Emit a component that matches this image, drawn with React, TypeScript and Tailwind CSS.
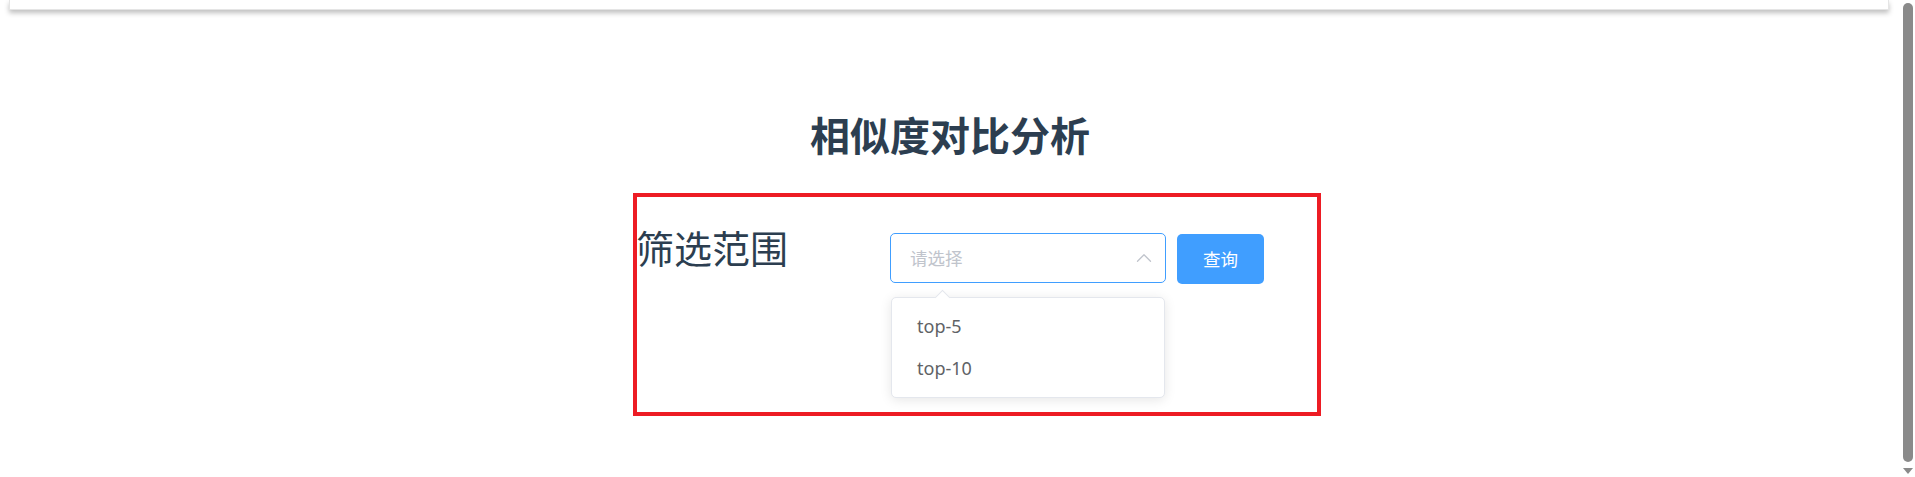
import { ChevronUp } from 'lucide-react';

const cjk = "font-['Noto_Sans','Noto_Sans_CJK_SC',sans-serif]";

function SelectBox() {
  return (
    <div className="relative mt-[5px]">
      <div className="flex h-[50px] w-[276px] items-center justify-between rounded-[5px] border border-[#409eff] bg-white pl-[19px] pr-[8px]">
        <span className="text-[17.5px] text-[#c0c4cc]">请选择</span>
        <ChevronUp className="h-[26px] w-[26px] text-[#c0c4cc]" strokeWidth={1.2} />
      </div>

      {/* dropdown popper */}
      <div className="absolute left-[1px] top-[64px] w-[274px] rounded-[5px] border border-[#e4e7ed] bg-white py-[7px] shadow-[0_2px_12px_0_rgba(0,0,0,0.1)]">
        <div className="absolute -top-[6px] left-[45px] h-[11px] w-[11px] rotate-45 border-l border-t border-[#e4e7ed] bg-white" />
        {['top-5', 'top-10'].map((item) => (
          <div key={item} className="flex h-[42.5px] items-center px-[25px] text-[18px] text-[#606266]">
            {item}
          </div>
        ))}
      </div>
    </div>
  );
}

export default function App() {
  return (
    <div className={`flex h-[477px] w-full overflow-hidden bg-white ${cjk}`}>
      <div className="flex-1">
        {/* header, scrolled mostly out of view */}
        <div className="ml-[9px] mr-[11px] h-[10px] border-x border-b border-[#e5e5e5] bg-white shadow-[0_3px_5px_rgba(0,0,0,0.25)]" />

        <h1 className="mt-[102px] text-center text-[40px] font-bold leading-[48px] text-[#2c3e50]">
          相似度对比分析
        </h1>

        <div className="ml-[633px] mt-[33px] h-[223px] w-[688px] border-4 border-[#ed1c24] pt-[31px]">
          <div className="flex items-start">
            <div className="-ml-[1px] w-[254px] text-[38px] leading-[40px] text-[#2c3e50]">筛选范围</div>
            <SelectBox />
            <button className="ml-[11px] mt-[6px] h-[50px] w-[87px] rounded-[5px] bg-[#409eff] text-[17.5px] text-white">
              查询
            </button>
          </div>
        </div>
      </div>

      {/* scrollbar */}
      <div className="flex w-[15px] flex-col items-center bg-white">
        <div className="ml-[1px] mt-[3px] h-[459px] w-[10px] rounded-full bg-[#8a8a8a]" />
        <div className="mt-[6px] h-0 w-0 border-x-[5px] border-t-[6px] border-x-transparent border-t-[#8a8a8a]" />
      </div>
    </div>
  );
}
